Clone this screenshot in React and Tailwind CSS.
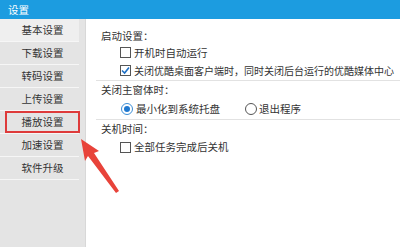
import React from 'react';

const font = { fontFamily: '"Noto Sans CJK SC", "Noto Sans", sans-serif' };

const menu = ['基本设置', '下载设置', '转码设置', '上传设置', '播放设置', '加速设置', '软件升级'];

function CheckBox({ checked }) {
    return (
        <span className="w-[11px] h-[11px] border border-[#555] bg-white flex items-center justify-center shrink-0">
            {checked && (
                <svg width="9" height="9" viewBox="0 0 9 9">
                    <path d="M1 4.5 L3.6 7 L8 1.5" fill="none" stroke="#1d6fc4" strokeWidth="1.6" />
                </svg>
            )}
        </span>
    );
}

function Radio({ checked }) {
    return (
        <span className={`w-[12px] h-[12px] rounded-full border bg-white flex items-center justify-center shrink-0 ${checked ? 'border-[#3d8fd6]' : 'border-[#555]'}`}>
            {checked && <span className="w-[6px] h-[6px] rounded-full bg-[#1f78cf]" />}
        </span>
    );
}

export default function App() {
    return (
        <div className="relative w-[400px] h-[247px] bg-white overflow-hidden text-[10.5px] text-[#333]" style={font}>
            <div className="h-[19px] bg-[#1c9ce0] text-white flex items-center pl-[8px] text-[10.5px]">设置</div>

            <div className="flex h-[228px]">
                <div className="w-[86px] bg-[#e4e4e4] border-r border-[#d8d8d8] shrink-0">
                    {menu.map((item, i) => (
                        <div
                            key={item}
                            className={`relative h-[23px] flex items-center justify-center border-b border-[#f6f6f6] mr-[6px] ${i === 0 ? 'bg-[#efefef]' : ''}`}
                        >
                            <span className="ml-[6px]">{item}</span>
                            {i === 4 && (
                                <div className="absolute left-[5px] -right-[1px] top-0 bottom-0 border-2 border-[#de3b3b]" />
                            )}
                        </div>
                    ))}
                </div>

                <div className="flex-1 pl-[10px]">
                    <div className="pt-[9px]">
                        <div className="h-[16px] flex items-center pl-[5px]">启动设置：</div>
                        <div className="h-[17px] flex items-center gap-[3px] pl-[24px]">
                            <CheckBox />
                            <span>开机时自动运行</span>
                        </div>
                        <div className="h-[19px] flex items-center gap-[3px] pl-[24px] whitespace-nowrap">
                            <CheckBox checked />
                            <span className="text-[10px]">关闭优酷桌面客户端时，同时关闭后台运行的优酷媒体中心</span>
                        </div>
                    </div>
                    <div className="border-t border-[#e2e2e2]">
                        <div className="h-[18px] flex items-center pl-[5px]">关闭主窗体时：</div>
                        <div className="h-[20px] flex items-center pl-[25px]">
                            <div className="flex items-center gap-[3px] w-[124px]">
                                <Radio checked />
                                <span>最小化到系统托盘</span>
                            </div>
                            <div className="flex items-center gap-[2px]">
                                <Radio />
                                <span>退出程序</span>
                            </div>
                        </div>
                    </div>
                    <div className="border-t border-[#e2e2e2]">
                        <div className="h-[18px] flex items-center pl-[5px]">关机时间：</div>
                        <div className="h-[18px] flex items-center gap-[3px] pl-[24px]">
                            <CheckBox />
                            <span>全部任务完成后关机</span>
                        </div>
                    </div>
                </div>
            </div>

            <svg className="absolute left-0 top-0" width="400" height="247" viewBox="0 0 400 247">
                <polygon
                    points="81,139 99,151 94,153 119,191 116,193 88,156 85,161"
                    fill="#e8433a"
                />
            </svg>
        </div>
    );
}
